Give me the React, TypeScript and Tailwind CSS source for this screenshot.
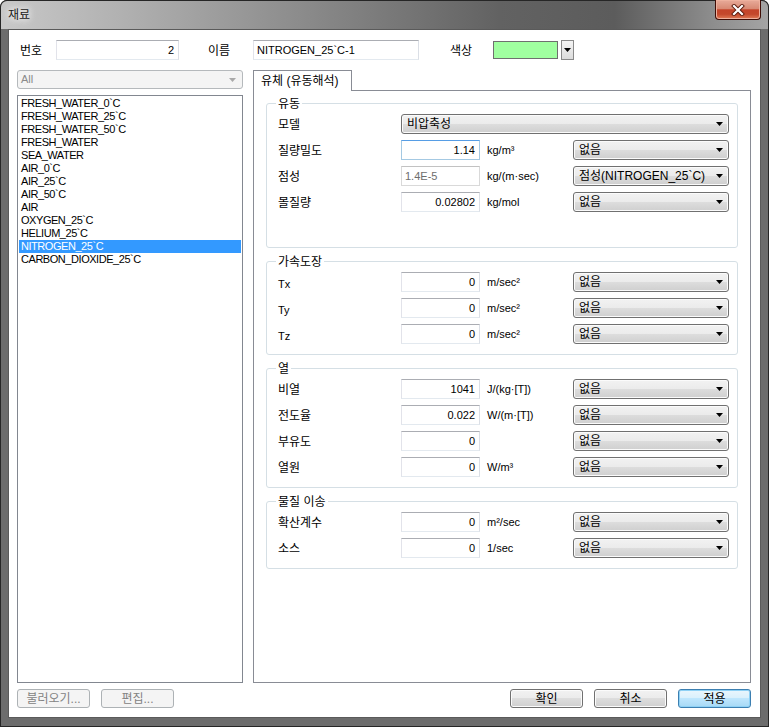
import React from "react";

function Arrow({ color = "#000" }: { color?: string }) {
  return (
    <svg width="7" height="4" viewBox="0 0 7 4" className="shrink-0">
      <polygon points="0,0 7,0 3.5,4" fill={color} />
    </svg>
  );
}

function Dropdown({ text, w }: { text: string; w: string }) {
  return (
    <div
      className={`${w} h-[20px] shrink-0 rounded-[3px] border border-[#707070] bg-[linear-gradient(#f2f2f2,#ebebeb_50%,#dddddd_50%,#cfcfcf)] shadow-[inset_0_0_0_1px_#fbfbfb] flex items-center pl-[5px] pr-[5px] text-[12px] leading-[14px] text-black`}
    >
      <span className="flex-1 truncate">{text}</span>
      <Arrow />
    </div>
  );
}

function Input({
  value,
  w,
  focused,
  disabled,
  left,
}: {
  value: string;
  w: string;
  focused?: boolean;
  disabled?: boolean;
  left?: boolean;
}) {
  const border = focused
    ? "border-[#a4c9e3] border-t-[#569de5]"
    : disabled
    ? "border-[#d9d9d9] border-t-[#c2c2c2]"
    : "border-[#e3e9ef] border-t-[#abadb3] border-l-[#e2e3ea] border-r-[#dbdfe6]";
  return (
    <div
      className={`${w} h-[20px] shrink-0 border ${border} bg-white flex items-center text-[11px] leading-[13px] ${
        left ? "justify-start pl-[3px]" : "justify-end pr-[4px]"
      } ${disabled ? "text-[#6d6d6d]" : "text-black"}`}
    >
      {value}
    </div>
  );
}

function Row({
  label,
  latin,
  value,
  unit,
  dd,
  focused,
  disabled,
}: {
  label: string;
  latin?: boolean;
  value: string;
  unit: string;
  dd: string;
  focused?: boolean;
  disabled?: boolean;
}) {
  return (
    <div className="flex items-center h-[20px]">
      <span
        className={`w-[123px] shrink-0 ${
          latin ? "text-[11px] translate-y-[2px]" : "text-[12px] translate-y-[1px]"
        } leading-[14px] text-black`}
      >
        {label}
      </span>
      <Input value={value} w="w-[79px]" focused={focused} disabled={disabled} left={disabled} />
      <span className="ml-[7px] w-[86px] shrink-0 text-[11px] leading-[13px] text-black whitespace-nowrap">{unit}</span>
      <Dropdown text={dd} w="w-[156px]" />
    </div>
  );
}

function Group({
  title,
  children,
  pb,
}: {
  title: string;
  children: React.ReactNode;
  pb: string;
}) {
  return (
    <div className={`relative border border-[#d5dfe5] rounded-[3px] pt-[10px] ${pb} pl-[11px] pr-[8px] flex flex-col gap-[6px]`}>
      <span className="absolute left-[9px] top-[-8px] bg-white px-[2px] text-[12px] leading-[16px] text-black">
        {title}
      </span>
      {children}
    </div>
  );
}

function Button({
  text,
  disabled,
  def,
}: {
  text: string;
  disabled?: boolean;
  def?: boolean;
}) {
  let cls =
    "border-[#707070] bg-[linear-gradient(#f2f2f2,#ebebeb_50%,#dddddd_50%,#cfcfcf)] shadow-[inset_0_0_0_1px_#fbfbfb] text-black";
  if (disabled) cls = "border-[#adb2b5] bg-[#f4f4f4] text-[#838383]";
  if (def)
    cls =
      "border-[#3c7fb1] bg-[linear-gradient(#eaf6fd,#d9f0fc_50%,#bee6fd_50%,#a7d9f5)] shadow-[inset_0_0_0_1px_#8ed1f5] text-black";
  return (
    <div
      className={`w-[73px] h-[19px] shrink-0 rounded-[3px] border ${cls} flex items-center justify-center text-[12px] leading-[14px]`}
    >
      {text}
    </div>
  );
}

const items = [
  "FRESH_WATER_0`C",
  "FRESH_WATER_25`C",
  "FRESH_WATER_50`C",
  "FRESH_WATER",
  "SEA_WATER",
  "AIR_0`C",
  "AIR_25`C",
  "AIR_50`C",
  "AIR",
  "OXYGEN_25`C",
  "HELIUM_25`C",
  "NITROGEN_25`C",
  "CARBON_DIOXIDE_25`C",
];

export default function App() {
  return (
    <div className="w-[769px] h-[727px] rounded-t-[7px] overflow-hidden bg-[#6c6c6c] shadow-[inset_0_0_0_1px_#262626] font-['Liberation_Sans','Noto_Sans_CJK_KR',sans-serif] flex flex-col">
      {/* title bar */}
      <div className="h-[29px] shrink-0 flex items-start rounded-t-[7px] border-t border-x border-[#262626] bg-[linear-gradient(to_right,#c8c8c8_0%,#b2b2b2_15%,#8a8a8a_40%,#626262_65%,#5c5c5c_80%,#8e8e8e_93%,#a4a4a4_100%)]">
        <span className="mt-[7px] ml-[7px] text-[12px] leading-[14px] text-[#1a1a1a] [text-shadow:0_0_6px_#ffffff,0_0_10px_#ffffff]">
          재료
        </span>
        <div className="ml-auto mr-[7px] mt-[-1px] w-[46px] h-[20px] rounded-b-[4px] border border-t-0 border-[#3f0d06] bg-[linear-gradient(#e8ab9a,#d88a74_45%,#c4442a_52%,#c4482c_75%,#e07c58)] shadow-[inset_0_0_0_1px_#eeb19e] flex items-center justify-center">
          <svg width="14" height="12" viewBox="0 0 14 12">
            <path d="M3 2 L11 10 M11 2 L3 10" stroke="#5a1a0c" strokeWidth="4" strokeLinecap="square" />
            <path d="M3 2 L11 10 M11 2 L3 10" stroke="#ffffff" strokeWidth="2.2" strokeLinecap="square" />
          </svg>
        </div>
      </div>

      {/* client */}
      <div className="mx-[8px] w-[753px] h-[689px] shrink-0 border border-[#5a5a5a] bg-white flex flex-col">
        {/* top row */}
        <div className="mt-[10px] h-[20px] flex items-center pl-[11px]">
          <span className="w-[36px] shrink-0 text-[12px] leading-[14px] translate-y-[1px]">번호</span>
          <Input value="2" w="w-[123px]" />
          <span className="ml-[29px] w-[45px] shrink-0 text-[12px] leading-[14px] translate-y-[1px]">이름</span>
          <Input value="NITROGEN_25`C-1" w="w-[166px]" left />
          <span className="ml-[31px] w-[43px] shrink-0 text-[12px] leading-[14px] translate-y-[1px]">색상</span>
          <div className="w-[65px] h-[18px] shrink-0 border border-[#6f6f6f] bg-[#a0ffa0]" />
          <div className="ml-[3px] w-[13px] h-[20px] shrink-0 border border-[#8a8a8a] bg-[linear-gradient(#f4f4f4,#dcdcdc)] flex items-center justify-center">
            <Arrow />
          </div>
        </div>

        {/* main row */}
        <div className="mt-[10px] h-[613px] flex gap-[10px] pl-[8px]">
          {/* left column */}
          <div className="w-[226px] shrink-0 flex flex-col">
            <div className="h-[19px] rounded-[3px] border border-[#b5b9bc] bg-[#f4f4f4] flex items-center pl-[3px] pr-[6px] text-[11px] leading-[13px] text-[#8a8a8a]">
              <span className="flex-1">All</span>
              <Arrow color="#a9a9a9" />
            </div>
            <div className="mt-[6px] h-[588px] border border-[#828790] bg-white pt-[1px] px-[1px]">
              {items.map((it) => {
                const sel = it === "NITROGEN_25`C";
                return (
                  <div
                    key={it}
                    className={`h-[13px] pl-[2px] text-[11px] leading-[13px] tracking-[-0.45px] whitespace-nowrap ${
                      sel ? "bg-[#3399ff] text-white" : "text-black"
                    }`}
                  >
                    {it}
                  </div>
                );
              })}
            </div>
          </div>

          {/* right column */}
          <div className="w-[498px] shrink-0 flex flex-col">
            <div className="h-[21px] flex">
              <div className="relative z-10 w-[99px] h-[21px] border border-b-0 border-[#898c95] bg-white pl-[7px] pt-[2px] text-[12px] leading-[16px] whitespace-nowrap">
                유체 (유동해석)
              </div>
            </div>
            <div className="mt-[-1px] h-[593px] border border-[#898c95] bg-white pt-[12px] px-[12px] flex flex-col gap-[13px]">
              <Group title="유동" pb="pb-[35px]">
                <div className="flex items-center h-[20px]">
                  <span className="w-[123px] shrink-0 text-[12px] leading-[14px] translate-y-[1px]">모델</span>
                  <Dropdown text="비압축성" w="w-[328px]" />
                </div>
                <Row label="질량밀도" value="1.14" unit="kg/m³" dd="없음" focused />
                <Row label="점성" value="1.4E-5" unit="kg/(m·sec)" dd="점성(NITROGEN_25`C)" disabled />
                <Row label="몰질량" value="0.02802" unit="kg/mol" dd="없음" />
              </Group>
              <Group title="가속도장" pb="pb-[10px]">
                <Row label="Tx" latin value="0" unit="m/sec²" dd="없음" />
                <Row label="Ty" latin value="0" unit="m/sec²" dd="없음" />
                <Row label="Tz" latin value="0" unit="m/sec²" dd="없음" />
              </Group>
              <Group title="열" pb="pb-[10px]">
                <Row label="비열" value="1041" unit="J/(kg·[T])" dd="없음" />
                <Row label="전도율" value="0.022" unit="W/(m·[T])" dd="없음" />
                <Row label="부유도" value="0" unit="" dd="없음" />
                <Row label="열원" value="0" unit="W/m³" dd="없음" />
              </Group>
              <Group title="물질 이송" pb="pb-[10px]">
                <Row label="확산계수" value="0" unit="m²/sec" dd="없음" />
                <Row label="소스" value="0" unit="1/sec" dd="없음" />
              </Group>
            </div>
          </div>
        </div>

        {/* bottom row */}
        <div className="mt-[6px] h-[19px] flex pl-[8px] pr-[9px] gap-[11px]">
          <Button text="불러오기..." disabled />
          <Button text="편집..." disabled />
          <div className="ml-auto flex gap-[11px]">
            <Button text="확인" />
            <Button text="취소" />
            <Button text="적용" def />
          </div>
        </div>
      </div>
    </div>
  );
}
